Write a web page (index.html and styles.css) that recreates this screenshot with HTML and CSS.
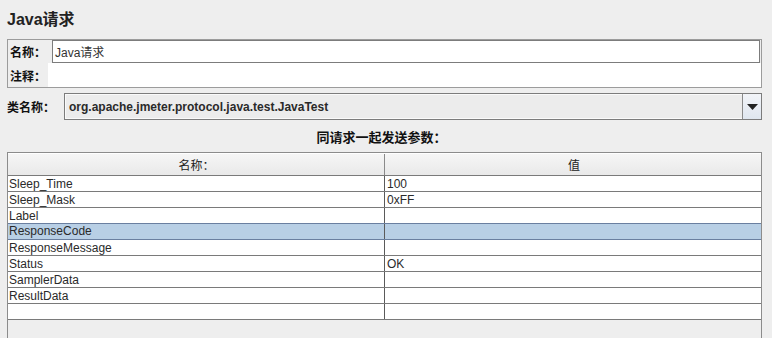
FILE: index.html
```html
<!DOCTYPE html>
<html>
<head>
<meta charset="utf-8">
<link rel="stylesheet" href="styles.css">
</head>
<body>
<div class="page">
  <div class="title">Java请求</div>
  <div class="form-box">
    <div class="frow r1">
      <span class="lbl l1">名称：</span>
      <div class="field bordered">Java请求</div>
    </div>
    <div class="frow r2">
      <span class="lbl l2">注释：</span>
      <div class="field plain"></div>
    </div>
  </div>
  <div class="class-row">
    <span class="lbl l3">类名称：</span>
    <div class="combo">
      <div class="combo-text">org.apache.jmeter.protocol.java.test.JavaTest</div>
      <div class="combo-btn"><svg width="11" height="6" viewBox="0 0 11 6"><path d="M0 0H11L5.5 6Z" fill="#222"/></svg></div>
    </div>
  </div>
  <div class="params-title">同请求一起发送参数：</div>
  <div class="table">
    <div class="trow head"><div class="c1">名称：</div><div class="c2">值</div></div>
    <div class="trow"><div class="c1">Sleep_Time</div><div class="c2">100</div></div>
    <div class="trow"><div class="c1">Sleep_Mask</div><div class="c2">0xFF</div></div>
    <div class="trow"><div class="c1">Label</div><div class="c2"></div></div>
    <div class="trow sel"><div class="c1">ResponseCode</div><div class="c2"></div></div>
    <div class="trow"><div class="c1">ResponseMessage</div><div class="c2"></div></div>
    <div class="trow"><div class="c1">Status</div><div class="c2">OK</div></div>
    <div class="trow"><div class="c1">SamplerData</div><div class="c2"></div></div>
    <div class="trow"><div class="c1">ResultData</div><div class="c2"></div></div>
    <div class="trow"><div class="c1"></div><div class="c2"></div></div>
    <div class="tfill"></div>
  </div>
</div>
</body>
</html>
```
FILE: styles.css
```css
html, body {
  margin: 0;
  padding: 0;
  background: #eeeeee;
}
body {
  font-family: "Liberation Sans", Arial, "Noto Sans CJK SC", sans-serif;
  font-size: 12px;
  color: #2a2a2a;
  width: 772px;
  height: 338px;
  overflow: hidden;
}
.page {
  display: flex;
  flex-direction: column;
  padding-left: 7px;
  width: 755px;
}
.title {
  height: 39px;
  box-sizing: border-box;
  padding-top: 10px;
  font-size: 16px;
  line-height: 20px;
  font-weight: bold;
  color: #222;
}
.form-box {
  border: 1px solid #9c9c9c;
  display: flex;
  flex-direction: column;
}
.frow {
  display: flex;
  align-items: stretch;
}
.r1 { height: 23px; }
.r2 { height: 24px; }
.lbl {
  font-family: "Noto Sans CJK SC", sans-serif;
  font-weight: bold;
  font-size: 12px;
  color: #111;
  display: flex;
  align-items: center;
}
.l1 { width: 42px; padding-left: 2px; }
.l2 { width: 38px; padding-left: 2px; }
.field {
  flex: 1;
  background: #fff;
  display: flex;
  align-items: center;
  padding-left: 2px;
}
.bordered {
  border: 1px solid #7c7c7c;
  margin-right: 1px;
  color: #333;
}
.class-row {
  display: flex;
  margin-top: 5px;
  height: 27px;
}
.l3 { width: 57px; }
.combo {
  flex: 1;
  display: flex;
  border: 1px solid #7c7c7c;
  background: #ececec;
}
.combo-text {
  flex: 1;
  display: flex;
  align-items: center;
  padding-left: 3px;
  font-weight: bold;
  font-size: 12px;
  color: #2a2a2a;
  border: 1px solid #fafafa;
  border-right: none;
}
.combo-btn {
  width: 18px;
  border-left: 1px solid #8a8a8a;
  background: linear-gradient(#f2f4f8, #dfe6ef);
  display: flex;
  align-items: center;
  justify-content: center;
}
.params-title {
  height: 32px;
  display: flex;
  align-items: center;
  justify-content: center;
  padding-right: 6px;
  font-family: "Noto Sans CJK SC", sans-serif;
  font-size: 13px;
  font-weight: bold;
  color: #111;
}
.table {
  border: 1px solid #8c8c8c;
  border-bottom: none;
  display: flex;
  flex-direction: column;
  height: 186px;
}
.trow {
  display: flex;
  height: 16px;
  background: #fff;
  border-bottom: 1px solid #7a7a7a;
  box-sizing: border-box;
}
.trow .c1 {
  width: 375px;
  border-right: 1px solid #5a5a5a;
  padding-left: 1px;
  line-height: 16px;
  white-space: nowrap;
}
.trow .c2 {
  flex: 1;
  padding-left: 2px;
  line-height: 16px;
}
.head {
  height: 23px;
  background: linear-gradient(#f6f6f6, #e9e9e9);
  border-top: 1px solid #fff;
  border-bottom: 1px solid #7a7a7a;
}
.head .c1, .head .c2 {
  text-align: center;
  line-height: 21px;
  font-family: "Noto Sans CJK SC", sans-serif;
  color: #222;
}
.head .c1 { border-right: 1px solid #8a8a8a; }
.sel {
  background: #b8cfe5;
  border-top: 1px solid #6a7fa0;
  margin-top: -1px;
  height: 17px !important;
  border-bottom: 1px solid #6a7fa0;
}
.sel .c1, .sel .c2 { line-height: 15px; }
.tfill {
  flex: 1;
  background: #eeeeee;
}
```
